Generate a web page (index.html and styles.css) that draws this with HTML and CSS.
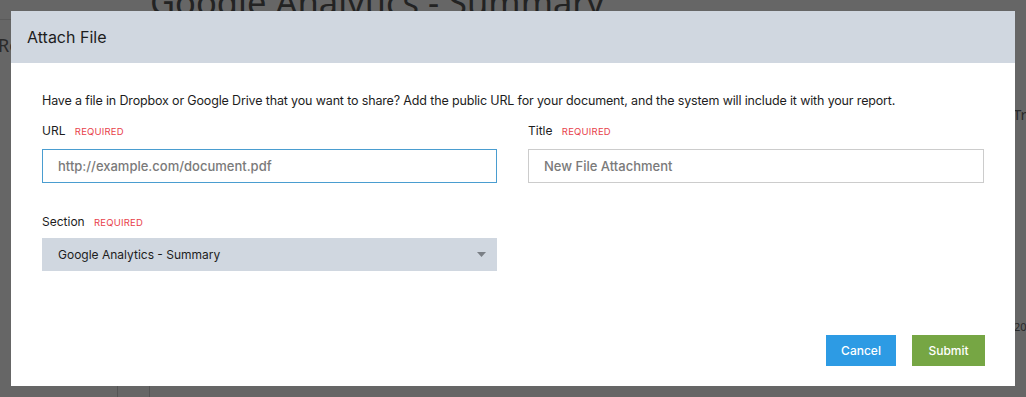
FILE: index.html
```html
<!DOCTYPE html>
<html>
<head>
<meta charset="utf-8">
<link rel="stylesheet" href="styles.css">
</head>
<body>
<div class="page">
  <div class="bg-title">Google Analytics - Summary</div>
  <div class="bg-rule bg-rule-top"></div>
  <div class="bg-side-left">Re</div>
  <div class="bg-side-right">Tre</div>
  <div class="bg-year">201</div>
  <div class="bg-vline bg-vline-a"></div>
  <div class="bg-vline bg-vline-b"></div>
</div>

<div class="modal">
  <div class="modal-header">Attach File</div>
  <div class="modal-body">
    <p class="intro">Have a file in Dropbox or Google Drive that you want to share? Add the public URL for your document, and the system will include it with your report.</p>
    <div class="grid">
      <div class="field">
        <div class="label">URL <span class="req">REQUIRED</span></div>
        <div class="input focused">http://example.com/document.pdf</div>
      </div>
      <div class="field">
        <div class="label">Title <span class="req">REQUIRED</span></div>
        <div class="input">New File Attachment</div>
      </div>
      <div class="field">
        <div class="label label-tight">Section <span class="req">REQUIRED</span></div>
        <div class="select">
          <span>Google Analytics - Summary</span>
          <svg class="caret" width="9" height="5" viewBox="0 0 9 5"><path d="M0 0H9L4.5 5Z" fill="#7a7f86"/></svg>
        </div>
      </div>
    </div>
    <div class="actions">
      <button class="btn btn-cancel">Cancel</button>
      <button class="btn btn-submit">Submit</button>
    </div>
  </div>
</div>
</body>
</html>
```
FILE: styles.css
```css
* { box-sizing: border-box; }
html, body { margin: 0; padding: 0; }
body {
  width: 1026px;
  height: 397px;
  overflow: hidden;
  background: #666666;
  font-family: "Inter", "Noto Sans", sans-serif;
  position: relative;
}
.page { position: absolute; inset: 0; }
.bg-title {
  position: absolute;
  left: 150px;
  top: -22px;
  font-size: 34.5px;
  color: #232323;
  font-family: "Noto Sans", sans-serif;
  white-space: nowrap;
}
.bg-rule {
  position: absolute;
  height: 1px;
  background: #5a5a5a;
}
.bg-rule-top { left: 0; top: 19px; width: 20px; }
.bg-side-left {
  position: absolute;
  left: -2px;
  top: 33px;
  font-size: 18px;
  color: #2a2a2a;
  font-family: "Noto Sans", sans-serif;
}
.bg-side-right {
  position: absolute;
  left: 1013px;
  top: 104px;
  font-size: 15px;
  color: #2a2a2a;
  font-family: "Noto Sans", sans-serif;
}
.bg-year {
  position: absolute;
  left: 1014px;
  top: 319px;
  font-size: 11px;
  color: #2a2a2a;
  font-family: "Noto Sans", sans-serif;
}
.bg-vline {
  position: absolute;
  top: 386px;
  width: 1px;
  height: 11px;
  background: #555;
}
.bg-vline-a { left: 117px; }
.bg-vline-b { left: 149px; }

.modal {
  position: absolute;
  left: 11px;
  top: 11px;
  width: 1004px;
  height: 375px;
  background: #ffffff;
  display: flex;
  flex-direction: column;
}
.modal-header {
  height: 52px;
  background: #d0d7e0;
  padding-left: 16px;
  display: flex;
  align-items: center;
  font-size: 16px;
  color: #1d1d1d;
}
.modal-body {
  flex: 1;
  padding: 29px 30px 20px 31px;
  display: flex;
  flex-direction: column;
}
.intro {
  margin: 0;
  font-size: 12.5px;
  letter-spacing: -0.15px;
  line-height: 18px;
  color: #1d1d1d;
}
.grid {
  margin-top: 12px;
  display: grid;
  grid-template-columns: 455px 456px;
  column-gap: 31px;
  row-gap: 30px;
}
.label {
  font-size: 12px;
  line-height: 18px;
  color: #1d1d1d;
  margin-bottom: 8px;
}
.label-tight { margin-bottom: 6px; }
.req {
  font-size: 9.5px;
  color: #e8414b;
  margin-left: 6px;
  letter-spacing: 0.2px;
}
.input {
  height: 34px;
  border: 1px solid #cccccc;
  padding: 0 15px;
  display: flex;
  align-items: center;
  font-size: 13px;
  color: #7a7a7a;
  font-weight: 500;
}
.input.focused { border-color: #4a9dd0; }
.select {
  height: 33px;
  background: #d0d7e0;
  padding: 0 11px 0 16px;
  display: flex;
  align-items: center;
  justify-content: space-between;
  font-size: 12px;
  color: #1d1d1d;
}
.actions {
  margin-top: auto;
  display: flex;
  justify-content: flex-end;
  gap: 16px;
}
.btn {
  height: 31px;
  border: none;
  color: #ffffff;
  font-family: inherit;
  font-size: 12px;
  font-weight: 500;
  padding: 0;
}
.btn-cancel { width: 70px; background: #2d9be4; }
.btn-submit { width: 73px; background: #76a644; }
```
